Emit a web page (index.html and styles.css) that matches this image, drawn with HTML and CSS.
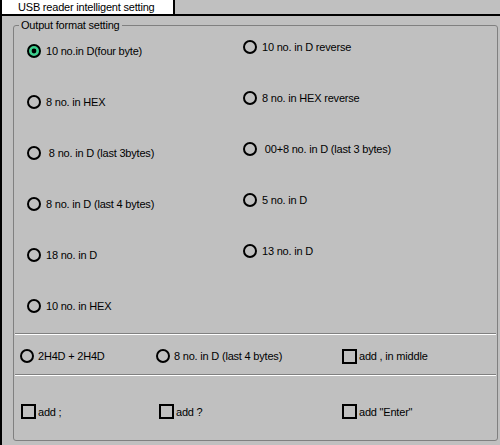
FILE: index.html
```html
<!DOCTYPE html>
<html>
<head>
<meta charset="utf-8">
<link rel="stylesheet" href="styles.css">
</head>
<body>
<div class="window">
  <div class="tabbar">
    <div class="tab">USB reader intelligent setting</div>
  </div>
  <div class="panel">
    <fieldset class="group">
      <legend class="legend">Output format setting</legend>
      <div class="options">
        <div class="col col-left">
          <div class="opt"><svg class="radio" viewBox="0 0 14 14"><circle cx="7" cy="7" r="7" fill="#9be8c0"/><circle cx="7" cy="7" r="6" fill="#3dcf8e" stroke="#000" stroke-width="2"/><circle cx="7" cy="7" r="2.4" fill="#000"/></svg><span>10 no.in D(four byte)</span></div>
          <div class="opt"><svg class="radio" viewBox="0 0 14 14"><circle cx="7" cy="7" r="6" fill="none" stroke="#000" stroke-width="2"/></svg><span>8 no. in HEX</span></div>
          <div class="opt"><svg class="radio" viewBox="0 0 14 14"><circle cx="7" cy="7" r="6" fill="none" stroke="#000" stroke-width="2"/></svg><span>&nbsp;8 no. in D (last 3bytes)</span></div>
          <div class="opt"><svg class="radio" viewBox="0 0 14 14"><circle cx="7" cy="7" r="6" fill="none" stroke="#000" stroke-width="2"/></svg><span>8 no. in D (last 4 bytes)</span></div>
          <div class="opt"><svg class="radio" viewBox="0 0 14 14"><circle cx="7" cy="7" r="6" fill="none" stroke="#000" stroke-width="2"/></svg><span>18 no. in D</span></div>
          <div class="opt"><svg class="radio" viewBox="0 0 14 14"><circle cx="7" cy="7" r="6" fill="none" stroke="#000" stroke-width="2"/></svg><span>10 no. in HEX</span></div>
        </div>
        <div class="col col-right">
          <div class="opt"><svg class="radio" viewBox="0 0 14 14"><circle cx="7" cy="7" r="6" fill="none" stroke="#000" stroke-width="2"/></svg><span>10 no. in D reverse</span></div>
          <div class="opt"><svg class="radio" viewBox="0 0 14 14"><circle cx="7" cy="7" r="6" fill="none" stroke="#000" stroke-width="2"/></svg><span>8 no. in HEX reverse</span></div>
          <div class="opt"><svg class="radio" viewBox="0 0 14 14"><circle cx="7" cy="7" r="6" fill="none" stroke="#000" stroke-width="2"/></svg><span>&nbsp;00+8 no. in D (last 3 bytes)</span></div>
          <div class="opt"><svg class="radio" viewBox="0 0 14 14"><circle cx="7" cy="7" r="6" fill="none" stroke="#000" stroke-width="2"/></svg><span>5 no. in D</span></div>
          <div class="opt"><svg class="radio" viewBox="0 0 14 14"><circle cx="7" cy="7" r="6" fill="none" stroke="#000" stroke-width="2"/></svg><span>13 no. in D</span></div>
        </div>
      </div>
      <div class="sep"></div>
      <div class="row row-radios">
        <div class="opt"><svg class="radio" viewBox="0 0 14 14"><circle cx="7" cy="7" r="6" fill="none" stroke="#000" stroke-width="2"/></svg><span>2H4D + 2H4D</span></div>
        <div class="opt"><svg class="radio" viewBox="0 0 14 14"><circle cx="7" cy="7" r="6" fill="none" stroke="#000" stroke-width="2"/></svg><span>8 no. in D (last 4 bytes)</span></div>
        <div class="opt opt-check"><span class="check"></span><span>add , in middle</span></div>
      </div>
      <div class="sep"></div>
      <div class="row row-checks">
        <div class="opt opt-check"><span class="check"></span><span>add ;</span></div>
        <div class="opt opt-check"><span class="check"></span><span>add ?</span></div>
        <div class="opt opt-check"><span class="check"></span><span>add "Enter"</span></div>
      </div>
    </fieldset>
  </div>
</div>
</body>
</html>
```

FILE: styles.css
```css
html, body {
  margin: 0;
  padding: 0;
  background: #c0c0c0;
}
body {
  width: 500px;
  height: 445px;
  overflow: hidden;
  font-family: "Liberation Sans", Arial, sans-serif;
  font-size: 11px;
  letter-spacing: -0.2px;
  color: #000;
}
.window {
  display: flex;
  flex-direction: column;
  height: 445px;
}
.tabbar {
  display: flex;
  border-bottom: 2px solid #000;
  height: 14px;
}
.tab {
  width: 155px;
  height: 14px;
  line-height: 14px;
  background: #fff;
  border-left: 2px solid #000;
  border-right: 2px solid #000;
  padding-left: 16px;
}
.panel {
  flex: 1;
  border-left: 2px solid #000;
  padding: 3px 2px 0 11px;
}
.group {
  margin: 0;
  padding: 0;
  border: 1px solid #808080;
  border-radius: 3px;
  height: 422px;
  box-sizing: border-box;
  display: flex;
  flex-direction: column;
}
.legend {
  padding: 0 2px;
  margin-left: 5px;
  line-height: 13px;
}
.options {
  display: grid;
  grid-template-columns: 216px 1fr;
  padding-left: 13px;
  height: 301px;
  box-sizing: border-box;
}
.col {
  display: flex;
  flex-direction: column;
  gap: 37px;
}
.col-left {
  padding-top: 12px;
}
.col-right {
  padding-top: 8px;
}
.opt {
  display: flex;
  align-items: center;
  height: 14px;
  white-space: nowrap;
}
.radio {
  width: 14px;
  height: 14px;
  flex: none;
  margin-right: 5px;
}
.check {
  width: 15px;
  height: 15px;
  box-sizing: border-box;
  border: 2px solid #000;
  flex: none;
  margin-right: 2px;
}
.sep {
  height: 0;
  border-top: 1px solid #808080;
  border-bottom: 1px solid #fff;
  margin: 0 1px;
}
.row {
  display: grid;
}
.row-radios {
  grid-template-columns: 136px 186px 1fr;
  padding: 14px 0 11px 6px;
}
.row-radios .radio {
  margin-right: 4px;
}
.row-checks {
  grid-template-columns: 138px 183px 1fr;
  padding: 28px 0 0 7px;
}
.row-checks .opt {
  height: 15px;
}
```
